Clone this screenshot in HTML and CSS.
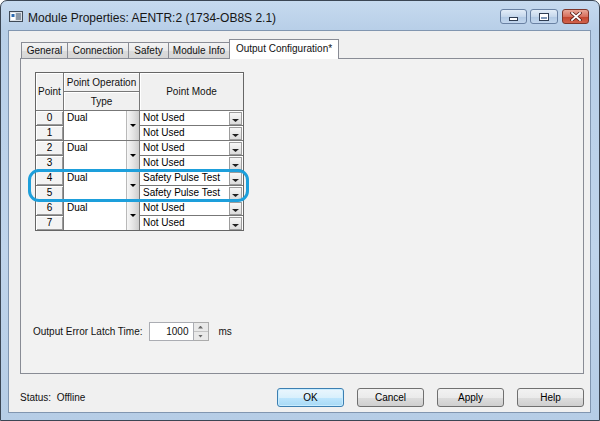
FILE: index.html
```html
<!DOCTYPE html>
<html lang="en">
<head>
    <meta charset="UTF-8">
    <title>Module Properties: AENTR:2 (1734-OB8S 2.1)</title>
    <link rel="stylesheet" href="styles.css">
</head>
<body>
    <div class="window">
        <div class="titlebar">
            <svg class="app-icon" width="14" height="11" viewBox="0 0 14 11">
                <rect x="0.5" y="0.5" width="13" height="10" fill="#d9dfe6" stroke="#3f4a57"/>
                <rect x="2" y="2" width="4" height="7" fill="#ffffff"/>
                <rect x="2.5" y="3" width="3" height="3" fill="#2d6bb0"/>
                <rect x="7" y="2" width="5" height="7" fill="#8c98a6"/>
            </svg>
            <span class="title">Module Properties: AENTR:2 (1734-OB8S 2.1)</span>
            <div class="caption-buttons">
                <span class="cap cap-min"><i></i></span>
                <span class="cap cap-max"><i></i></span>
                <span class="cap cap-close">
                    <svg width="12" height="9" viewBox="0 0 12 9">
                        <path d="M2 1 L10 8 M10 1 L2 8" stroke="#5a1f18" stroke-width="3.4" stroke-linecap="square"/>
                        <path d="M2 1 L10 8 M10 1 L2 8" stroke="#ffffff" stroke-width="1.8" stroke-linecap="square"/>
                    </svg>
                </span>
            </div>
        </div>

        <div class="client">
            <div class="tabs">
                <div class="tab tab-general">General</div>
                <div class="tab tab-connection">Connection</div>
                <div class="tab tab-safety">Safety</div>
                <div class="tab tab-info">Module Info</div>
                <div class="tab tab-output active">Output Configuration*</div>
            </div>

            <div class="panel">
                <div class="grid-wrap">
                    <div class="points">
                        <div class="th th-point">Point</div>
                        <div class="th">Point Operation</div>
                        <div class="th th-mode">Point Mode</div>
                        <div class="th">Type</div>

                        <div class="num">0</div>
                        <div class="type"><span>Dual</span><b class="drop"><i class="arrow"></i></b></div>
                        <div class="mode"><span>Not Used</span><b class="drop-sm"><i class="arrow-sm"></i></b></div>
                        <div class="num">1</div>
                        <div class="mode"><span>Not Used</span><b class="drop-sm"><i class="arrow-sm"></i></b></div>

                        <div class="num">2</div>
                        <div class="type"><span>Dual</span><b class="drop"><i class="arrow"></i></b></div>
                        <div class="mode"><span>Not Used</span><b class="drop-sm"><i class="arrow-sm"></i></b></div>
                        <div class="num">3</div>
                        <div class="mode"><span>Not Used</span><b class="drop-sm"><i class="arrow-sm"></i></b></div>

                        <div class="num">4</div>
                        <div class="type"><span>Dual</span><b class="drop"><i class="arrow"></i></b></div>
                        <div class="mode"><span>Safety Pulse Test</span><b class="drop-sm"><i class="arrow-sm"></i></b></div>
                        <div class="num">5</div>
                        <div class="mode"><span>Safety Pulse Test</span><b class="drop-sm"><i class="arrow-sm"></i></b></div>

                        <div class="num">6</div>
                        <div class="type"><span>Dual</span><b class="drop"><i class="arrow"></i></b></div>
                        <div class="mode"><span>Not Used</span><b class="drop-sm"><i class="arrow-sm"></i></b></div>
                        <div class="num">7</div>
                        <div class="mode"><span>Not Used</span><b class="drop-sm"><i class="arrow-sm"></i></b></div>
                    </div>
                    <div class="highlight"></div>
                </div>

                <div class="latch">
                    <span class="latch-label">Output Error Latch Time:</span>
                    <span class="spin-field">1000</span>
                    <span class="spinner">
                        <span class="spin-up"><i></i></span>
                        <span class="spin-down"><i></i></span>
                    </span>
                    <span class="unit">ms</span>
                </div>
            </div>

            <div class="footer">
                <span class="status">Status:&nbsp; Offline</span>
                <button class="btn btn-default">OK</button>
                <button class="btn">Cancel</button>
                <button class="btn">Apply</button>
                <button class="btn">Help</button>
            </div>
        </div>
    </div>
</body>
</html>
```

FILE: styles.css
```css
* {
    box-sizing: border-box;
}
body {
    margin: 0;
    width: 600px;
    height: 421px;
    overflow: hidden;
    background: #ffffff;
    font-family: 'Liberation Sans', Arial, sans-serif;
    font-size: 10px;
    color: #000;
}
.window {
    height: 421px;
    display: flex;
    flex-direction: column;
    padding: 0 8px 7px 7px;
    border: 1px solid #3b4654;
    border-radius: 7px 7px 0 0;
    background: linear-gradient(#c6daef, #b8cfe8 28px, #bfd4eb 60%, #b6cde6);
}
.titlebar {
    height: 29px;
    display: flex;
    align-items: flex-start;
}
.app-icon {
    margin: 10px 0 0 1px;
}
.title {
    margin: 9px 0 0 5px;
    font-size: 12px;
    line-height: 16px;
    color: #161616;
}
.caption-buttons {
    display: flex;
    margin: 8px 2px 0 auto;
}
.cap {
    width: 27px;
    height: 15px;
    border: 1px solid #6981a3;
    border-radius: 3px;
    background: linear-gradient(#e3edf8, #c6d8ec 50%, #b0c8e3 51%, #c3d7ee);
    display: flex;
    align-items: center;
    justify-content: center;
}
.cap-max {
    width: 28px;
    margin-left: 3px;
}
.cap-close {
    margin-left: 4px;
    border-color: #7e3529;
    background: linear-gradient(#e9a797, #d7705e 50%, #c2432c 51%, #d1624c);
}
.cap-min i {
    width: 9px;
    height: 4px;
    margin-top: 5px;
    background: #fff;
    border: 1px solid #2f3d52;
}
.cap-max i {
    width: 10px;
    height: 8px;
    border: 1px solid #2f3d52;
    box-shadow: inset 0 0 0 1px #fff, inset 0 2px 0 1px #fff;
    background: #7f97b7;
}
.client {
    flex: 1;
    display: flex;
    flex-direction: column;
    background: #f0f0f0;
    border: 1px solid #8196b0;
}
.tabs {
    height: 27px;
    display: flex;
    align-items: flex-end;
    padding-left: 12px;
}
.tab {
    height: 16px;
    margin-right: -1px;
    border: 1px solid #898c95;
    border-bottom: none;
    background: linear-gradient(#f4f4f4, #e9e9e9 50%, #dcdcdc 51%, #d6d6d6);
    text-align: center;
    line-height: 16px;
    color: #111;
}
.tab-general { width: 47px; }
.tab-connection { width: 62px; }
.tab-safety { width: 41px; }
.tab-info { width: 62px; }
.tab-output { width: 110px; }
.tab.active {
    height: 20px;
    margin-bottom: -1px;
    position: relative;
    background: #ffffff;
    line-height: 17px;
}
.panel {
    height: 316px;
    margin: 0 6px 0 11px;
    padding-top: 13px;
    display: flex;
    flex-direction: column;
    align-items: flex-start;
    border: 1px solid #898c95;
    background: #f2f2f2;
}
.grid-wrap {
    position: relative;
    margin-left: 14px;
}
.points {
    display: grid;
    grid-template-columns: 27px 75px 103px;
    grid-template-rows: 18px 18px repeat(8, 14px);
    gap: 1px;
    border: 1px solid #666;
    background: #777;
}
.th {
    display: flex;
    align-items: center;
    justify-content: center;
    background: #f0f0f0;
    box-shadow: inset 1px 1px #fff;
    color: #111;
}
.th-point,
.th-mode {
    grid-row: span 2;
}
.num {
    text-align: center;
    line-height: 14px;
    background: #f3f3f3;
    box-shadow: inset 1px 1px #fff, inset -1px -1px #9a9a9a;
}
.type {
    grid-row: span 2;
    display: flex;
    background: #fff;
}
.type span {
    flex: 1;
    padding: 0 3px;
    line-height: 13px;
}
.drop {
    width: 13px;
    display: flex;
    align-items: center;
    justify-content: center;
    border-left: 1px solid #b9b9b9;
    background: linear-gradient(90deg, #f7f7f7, #e2e2e2 55%, #cdcdcd);
}
.arrow {
    width: 0;
    height: 0;
    border-left: 3px solid transparent;
    border-right: 3px solid transparent;
    border-top: 3px solid #000;
}
.mode {
    display: flex;
    background: #fff;
}
.mode span {
    flex: 1;
    padding-left: 3px;
    line-height: 13px;
    white-space: nowrap;
}
.drop-sm {
    width: 13px;
    margin: 1px 1px 0 0;
    padding-bottom: 2px;
    display: flex;
    align-items: flex-end;
    justify-content: center;
    border: 1px solid #9c9c9c;
    background: linear-gradient(#f7f7f7, #dcdcdc);
}
.arrow-sm {
    width: 7px;
    height: 3px;
    background: #222;
    clip-path: polygon(0 0, 100% 0, 50% 100%);
}
.highlight {
    position: absolute;
    left: -7px;
    top: 97px;
    width: 221px;
    height: 33px;
    border: 3px solid #1d9fdb;
    border-radius: 11px;
}
.latch {
    margin: auto 0 32px 12px;
    height: 19px;
    display: flex;
    align-items: center;
    color: #111;
}
.spin-field {
    width: 45px;
    height: 19px;
    margin-left: 6px;
    padding-right: 4px;
    border: 1px solid #abadb3;
    background: #fff;
    text-align: right;
    line-height: 17px;
}
.spinner {
    width: 15px;
    height: 19px;
    display: flex;
    flex-direction: column;
    border: 1px solid #acacac;
    border-left: none;
    background: #e9e9e9;
}
.spinner span {
    flex: 1;
    display: flex;
    align-items: center;
    justify-content: center;
}
.spin-up {
    border-bottom: 1px solid #c4c4c4;
}
.spinner i {
    width: 5px;
    height: 3px;
    background: #6a6a6a;
}
.spin-up i {
    clip-path: polygon(50% 0, 100% 100%, 0 100%);
}
.spin-down i {
    clip-path: polygon(0 0, 100% 0, 50% 100%);
}
.unit {
    margin-left: 10px;
}
.footer {
    height: 38px;
    display: flex;
    align-items: flex-start;
    gap: 13px;
    padding: 14px 6px 0 11px;
}
.status {
    flex: 1;
    line-height: 19px;
    color: #111;
}
.btn {
    width: 67px;
    height: 19px;
    padding: 0;
    border: 1px solid #707070;
    border-radius: 3px;
    background: linear-gradient(#f2f2f2, #ebebeb 50%, #dddddd 51%, #cfcfcf);
    font-family: 'Liberation Sans', Arial, sans-serif;
    font-size: 10px;
    color: #000;
}
.btn-default {
    border-color: #3c7fb1;
    background: linear-gradient(#eaf6fd, #d9f0fc 50%, #bee6fd 51%, #a7d9f5);
    box-shadow: inset 0 0 0 1px #c8ecff;
}
```
